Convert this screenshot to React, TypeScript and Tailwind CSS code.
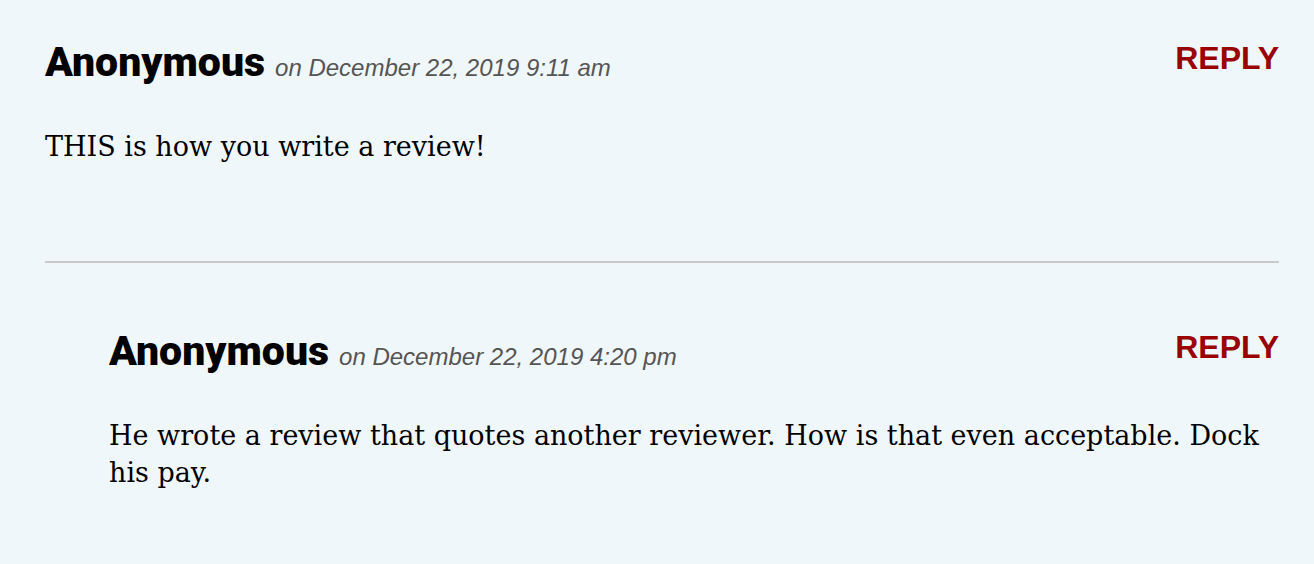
const sans = "font-['Liberation_Sans',Arial,sans-serif]";

function Comment({ date, text }: { date: string; text: string }) {
  return (
    <div>
      <div className="flex items-start justify-between">
        <div className="flex items-baseline gap-[10px]">
          <span className="font-['Roboto',sans-serif] text-[41px] leading-[44px] font-black text-black">
            Anonymous
          </span>
          <span className={`${sans} text-[24px] italic text-[#555555]`}>on {date}</span>
        </div>
        <a href="#" className={`${sans} mt-[2px] text-[32px] leading-[32px] font-bold text-[#990000]`}>
          REPLY
        </a>
      </div>
      <p className="mt-[42px] font-['DejaVu_Serif',serif] text-[27px] leading-[37px] text-black">{text}</p>
    </div>
  );
}

export default function App() {
  return (
    <div className="min-h-screen bg-[#f0f7fb] pl-[45px] pr-[35px] pt-[40px]">
      <Comment date="December 22, 2019 9:11 am" text="THIS is how you write a review!" />
      <div className="mt-[96px] border-t-2 border-[#cacaca]" />
      <div className="pl-[64px] pt-[66px]">
        <Comment
          date="December 22, 2019 4:20 pm"
          text="He wrote a review that quotes another reviewer. How is that even acceptable. Dock his pay."
        />
      </div>
    </div>
  );
}
